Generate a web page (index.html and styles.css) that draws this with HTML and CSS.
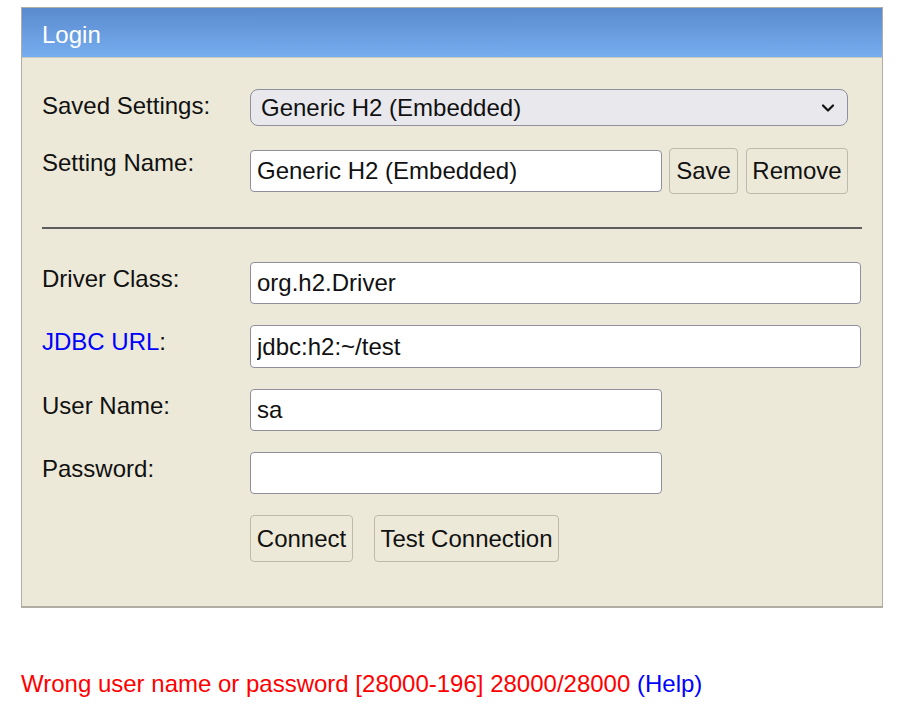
FILE: index.html
```html
<!DOCTYPE html>
<html>
<head>
<meta charset="utf-8">
<title>H2 Console</title>
<link rel="stylesheet" href="styles.css">
</head>
<body>
<div class="page">
  <form class="login">
    <div class="login-head">Login</div>
    <div class="login-body">
      <div class="row row-select">
        <label class="lbl">Saved Settings:</label>
        <div class="select-wrap">
          <select class="select"><option>Generic H2 (Embedded)</option></select>
          <svg class="chev" width="14" height="10" viewBox="0 0 14 10"><path d="M2 2.5 L7 7.5 L12 2.5" fill="none" stroke="#111" stroke-width="2.2" stroke-linecap="round" stroke-linejoin="round"/></svg>
        </div>
      </div>
      <div class="row row-name">
        <label class="lbl lbl-tight">Setting Name:</label>
        <div class="ctrls">
          <input class="input short" type="text" value="Generic H2 (Embedded)">
          <button type="button" class="btn btn-save">Save</button>
          <button type="button" class="btn btn-remove">Remove</button>
        </div>
      </div>
      <hr class="sep">
      <div class="row">
        <label class="lbl">Driver Class:</label>
        <input class="input long" type="text" value="org.h2.Driver">
      </div>
      <div class="row">
        <label class="lbl"><a class="link" href="#">JDBC URL</a>:</label>
        <input class="input long tall" type="text" value="jdbc:h2:~/test">
      </div>
      <div class="row">
        <label class="lbl">User Name:</label>
        <input class="input short" type="text" value="sa">
      </div>
      <div class="row">
        <label class="lbl">Password:</label>
        <input class="input short" type="password" value="">
      </div>
      <div class="row row-btns">
        <span class="lbl"></span>
        <div class="ctrls gap-wide">
          <button type="button" class="btn btn-connect">Connect</button>
          <button type="button" class="btn btn-test">Test Connection</button>
        </div>
      </div>
    </div>
  </form>
  <p class="error">Wrong user name or password [28000-196] 28000/28000 <a class="link" href="#">(Help)</a></p>
</div>
</body>
</html>
```
FILE: styles.css
```css
html, body {
  margin: 0;
  padding: 0;
  background: #ffffff;
}
body {
  font-family: "Liberation Sans", Arial, sans-serif;
  font-size: 24px;
  color: #111;
}
.page {
  padding: 7px 17px 0 21px;
}
.login {
  display: block;
  width: 860px;
  border: 1px solid #b0aea4;
  border-bottom-width: 2px;
  background: #ece9d8;
  margin: 0;
}
.login-head {
  height: 50px;
  box-sizing: border-box;
  padding: 13px 0 0 20px;
  line-height: 28px;
  color: #ffffff;
  background: linear-gradient(#5a8ace, #76aef0);
  border-bottom: 1px solid #c9c9c0;
}
.login-body {
  padding: 31px 20px 44px 20px;
}
.row {
  display: flex;
  align-items: flex-start;
  margin-top: 21px;
}
.row-select {
  margin-top: 0;
}
.row-name {
  margin-top: 22px;
}
.lbl {
  width: 208px;
  flex: none;
  padding-top: 3px;
  line-height: 28px;
}
.lbl-tight {
  padding-top: 1px;
}
.link {
  color: #0000ff;
  text-decoration: none;
}
.select-wrap {
  position: relative;
  width: 598px;
  height: 37px;
}
.select {
  appearance: none;
  -webkit-appearance: none;
  width: 100%;
  height: 37px;
  box-sizing: border-box;
  border: 1px solid #8f8f9d;
  border-radius: 8px;
  background: #e9e9ed;
  font: inherit;
  color: #111;
  padding: 0 0 0 10px;
  margin: 0;
}
.chev {
  position: absolute;
  right: 13px;
  top: 14px;
  pointer-events: none;
}
.ctrls {
  display: flex;
  align-items: center;
  gap: 7px;
}
.gap-wide {
  gap: 21px;
}
.input {
  box-sizing: border-box;
  height: 42px;
  border: 1px solid #8f8f9d;
  border-radius: 4px;
  background: #ffffff;
  font: inherit;
  color: #111;
  padding: 0 6px;
  margin: 0;
}
.tall {
  height: 43px;
}
.short {
  width: 412px;
}
.long {
  width: 611px;
}
.btn {
  box-sizing: border-box;
  height: 46px;
  border: 1px solid #bcb9ad;
  border-radius: 4px;
  background: #ece9d8;
  font: inherit;
  color: #111;
  padding: 0 4px;
  margin: 0;
}
.btn-save { width: 69px; }
.btn-remove { width: 102px; margin-left: 1px; }
.btn-connect { width: 103px; height: 47px; }
.btn-test { width: 185px; height: 47px; }
.sep {
  border: 0;
  height: 0;
  border-top: 2px solid #5e5e5e;
  margin: 33px 0 0 0;
}
.sep + .row {
  margin-top: 33px;
}
.error {
  margin: 62px 0 0 0;
  color: #ff0000;
  line-height: 28px;
}
```
